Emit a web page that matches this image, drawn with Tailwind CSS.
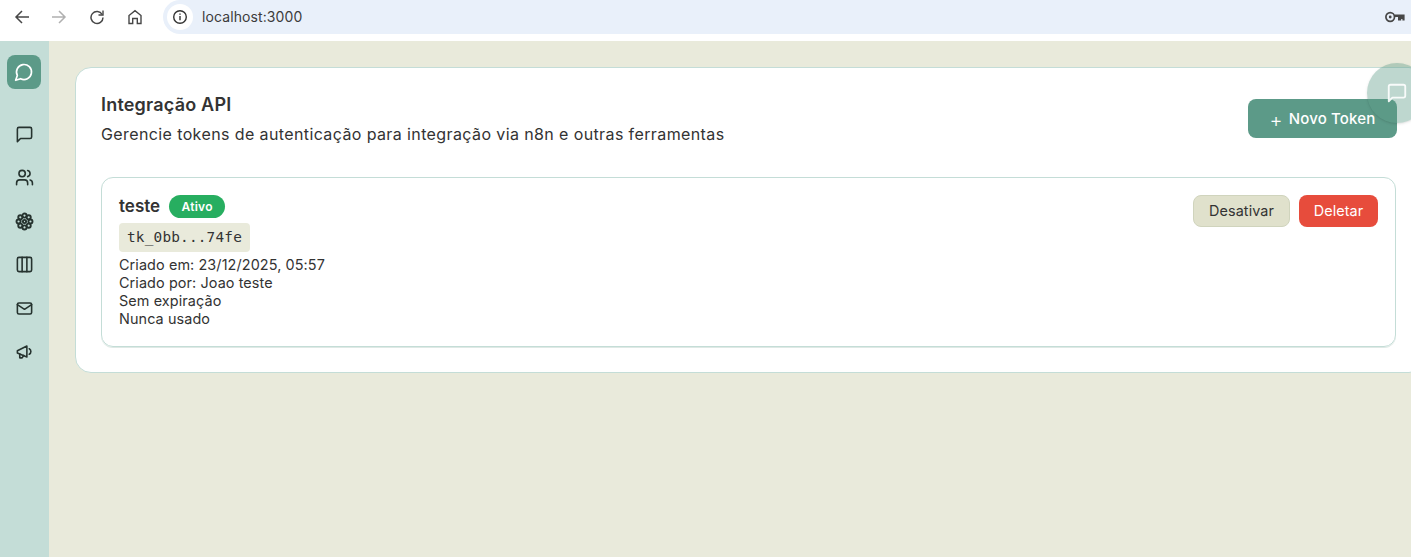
<!DOCTYPE html>
<html lang="pt-BR">
<head>
  <meta charset="UTF-8" />
  <title>Integração API</title>
  <script src="https://cdn.jsdelivr.net/npm/@tailwindcss/browser@4"></script>
</head>
<body class="h-[557px] w-[1411px] overflow-hidden bg-[#e9eadb] font-['Inter',sans-serif] text-[#333]">

  <!-- Browser bar -->
  <div class="flex h-[41px] items-start bg-white">
    <div class="flex h-[34px] items-center text-[#474747]">
      <svg class="ml-[14px] size-[16px]" viewBox="0 0 16 16" fill="none" stroke="currentColor" stroke-width="1.5"><path d="M15 8H2M8 2 2 8l6 6"/></svg>
      <svg class="ml-[21px] size-[16px] text-[#b0b0b0]" viewBox="0 0 16 16" fill="none" stroke="currentColor" stroke-width="1.5"><path d="M1 8h13M8 2l6 6-6 6"/></svg>
      <svg class="ml-[22px] size-[16px]" viewBox="0 0 16 16" fill="none" stroke="currentColor" stroke-width="1.5"><path d="M13.2 5.5A6 6 0 1 0 14 8.5"/><path d="M14 1.5v4.5H9.5" stroke-width="1.4"/></svg>
      <svg class="ml-[22px] size-[16px]" viewBox="0 0 16 16" fill="none" stroke="currentColor" stroke-width="1.4"><path d="M2 14.5V6.5L8 1.7l6 4.8v8h-3.7V9.5H5.7v5z"/></svg>
    </div>
    <div class="ml-[20px] flex h-[34px] flex-1 items-center rounded-l-[17px] bg-[#e9f0fa] pl-[4px]">
      <div class="flex size-[26px] items-center justify-center rounded-full bg-white">
        <svg class="size-[16px] text-[#333]" viewBox="0 0 16 16" fill="none" stroke="currentColor" stroke-width="1.4"><circle cx="8" cy="8" r="6.3"/><path d="M8 7v4.2M8 4.4v1.4"/></svg>
      </div>
      <span class="ml-[9px] mb-[1px] text-[14px] tracking-[0.1px] text-[#3c3c3c]">localhost:3000</span>
      <svg class="ml-auto mr-[6px] h-[12px] w-[20px] text-[#474747]" viewBox="0 0 20 12" fill="none" stroke="currentColor"><circle cx="5.2" cy="6" r="4.3" stroke-width="1.7"/><circle cx="5.2" cy="6" r="1.4" fill="currentColor" stroke="none"/><path d="M9.5 3.6H19.6v5.9h-2.2V8h-1.2v1.5H13V6H9.5z" fill="currentColor" stroke="none"/></svg>
    </div>
  </div>

  <div class="flex h-[516px]">
    <!-- Sidebar -->
    <aside class="flex w-[49px] shrink-0 flex-col items-center bg-[#c4ddd7] pt-[14px] pr-[1px] text-[#26332f]">
      <div class="flex size-[34px] items-center justify-center rounded-[8px] bg-[#5c9a88] text-white">
        <svg class="size-[20px]" viewBox="0 0 24 24" fill="none" stroke="currentColor" stroke-width="2" stroke-linecap="round" stroke-linejoin="round"><path d="M7.9 20A9 9 0 1 0 4 16.1L2 22Z"/></svg>
      </div>
      <div class="mt-[36px] flex flex-col gap-[24.4px]">
        <svg class="size-[19px]" viewBox="0 0 24 24" fill="none" stroke="currentColor" stroke-width="2" stroke-linecap="round" stroke-linejoin="round"><path d="M21 15a2 2 0 0 1-2 2H7l-4 4V5a2 2 0 0 1 2-2h14a2 2 0 0 1 2 2z"/></svg>
        <svg class="size-[19px]" viewBox="0 0 24 24" fill="none" stroke="currentColor" stroke-width="2" stroke-linecap="round" stroke-linejoin="round"><path d="M16 21v-2a4 4 0 0 0-4-4H6a4 4 0 0 0-4 4v2"/><circle cx="9" cy="7" r="4"/><path d="M22 21v-2a4 4 0 0 0-3-3.87M16 3.13a4 4 0 0 1 0 7.75"/></svg>
        <svg class="size-[19px]" viewBox="0 0 24 24" fill="none" stroke="currentColor" stroke-width="2.4"><circle cx="12" cy="12" r="2"/><circle cx="12" cy="4.5" r="2.6"/><circle cx="12" cy="19.5" r="2.6"/><circle cx="4.5" cy="12" r="2.6"/><circle cx="19.5" cy="12" r="2.6"/><circle cx="6.7" cy="6.7" r="2.6"/><circle cx="17.3" cy="6.7" r="2.6"/><circle cx="6.7" cy="17.3" r="2.6"/><circle cx="17.3" cy="17.3" r="2.6"/></svg>
        <svg class="size-[19px]" viewBox="0 0 24 24" fill="none" stroke="currentColor" stroke-width="2" stroke-linecap="round" stroke-linejoin="round"><rect x="3" y="3" width="18" height="18" rx="2"/><path d="M9 3v18M15 3v18"/></svg>
        <svg class="size-[19px]" viewBox="0 0 24 24" fill="none" stroke="currentColor" stroke-width="2" stroke-linecap="round" stroke-linejoin="round"><rect x="3" y="5" width="18" height="14" rx="2"/><path d="m3 7 9 6 9-6"/></svg>
        <svg class="size-[19px]" viewBox="0 0 24 24" fill="none" stroke="currentColor" stroke-width="2" stroke-linecap="round" stroke-linejoin="round"><path d="M15 5 3 11v3l12 5z"/><path d="M6 15v5h3l2-3"/><path d="M18 8.5a4 4 0 0 1 0 7"/></svg>
      </div>
    </aside>

    <!-- Main -->
    <main class="relative min-w-0 flex-1 pt-[26px] pl-[26px]">
      <section class="h-[306px] w-[1350px] rounded-[16px] border border-[#c4ddd7] bg-white pt-[25px] pr-[14px] pl-[25px]">
        <div class="flex w-[1296px] items-start justify-between">
          <div>
            <h1 class="text-[18px] leading-[24px] font-semibold tracking-[0.2px] text-[#333]">Integração API</h1>
            <p class="mt-[5px] text-[16px] leading-[24px] tracking-[0.39px] text-[#333]">Gerencie tokens de autenticação para integração via n8n e outras ferramentas</p>
          </div>
          <button class="mt-[6px] flex h-[39px] w-[149px] items-center justify-center rounded-[8px] bg-[#5c9a88] pt-[1px] text-[15px] font-medium tracking-[0.15px] text-white">
            <span class="mr-[6px] mt-[2px] text-[20px] leading-none font-light">+</span>Novo Token
          </button>
        </div>

        <div class="mt-[31px] flex h-[170px] w-[1295px] items-start justify-between rounded-[12px] border border-[#c4ddd7] pt-[17px] pr-[17px] pl-[17px] shadow-[0_1px_0_#dfe9e5]">
          <div>
            <div class="flex h-[23px] items-center gap-[9px]">
              <span class="pt-[1px] text-[17px] font-semibold text-[#333]">teste</span>
              <span class="flex h-[23px] w-[56px] items-center justify-center rounded-full bg-[#27ae60] text-[12px] font-semibold tracking-[0.3px] text-white">Ativo</span>
            </div>
            <div class="mt-[5px] flex h-[29px] w-[131px] items-center justify-center rounded-[4px] bg-[#e9eadb] font-['DejaVu_Sans_Mono',monospace] text-[14.4px] tracking-[0.18px] text-[#333]">tk_0bb...74fe</div>
            <div class="mt-[4px] text-[14.4px] leading-[18px] tracking-[0.1px] text-[#333]">
              <div>Criado em: 23/12/2025, 05:57</div>
              <div>Criado por: Joao teste</div>
              <div>Sem expiração</div>
              <div>Nunca usado</div>
            </div>
          </div>
          <div class="flex gap-[9px]">
            <button class="h-[32px] w-[97px] rounded-[8px] border border-[#d0d4bd] bg-[#e0e1cc] text-[14.4px] font-normal tracking-[0.1px] text-[#333]">Desativar</button>
            <button class="h-[32px] w-[79px] rounded-[8px] bg-[#e74c3c] text-[14.4px] font-normal tracking-[0.1px] text-white">Deletar</button>
          </div>
        </div>
      </section>

      <!-- Floating chat button -->
      <div class="absolute top-[22px] left-[1318px] flex h-[60px] w-[60px] items-center rounded-full bg-[#5c9a88]/40 pl-[19px] text-white/90 shadow-sm">
        <svg class="size-[22px]" viewBox="0 0 24 24" fill="none" stroke="currentColor" stroke-width="2" stroke-linecap="round" stroke-linejoin="round"><path d="M21 15a2 2 0 0 1-2 2H7l-4 4V5a2 2 0 0 1 2-2h14a2 2 0 0 1 2 2z"/></svg>
      </div>
    </main>
  </div>
</body>
</html>
